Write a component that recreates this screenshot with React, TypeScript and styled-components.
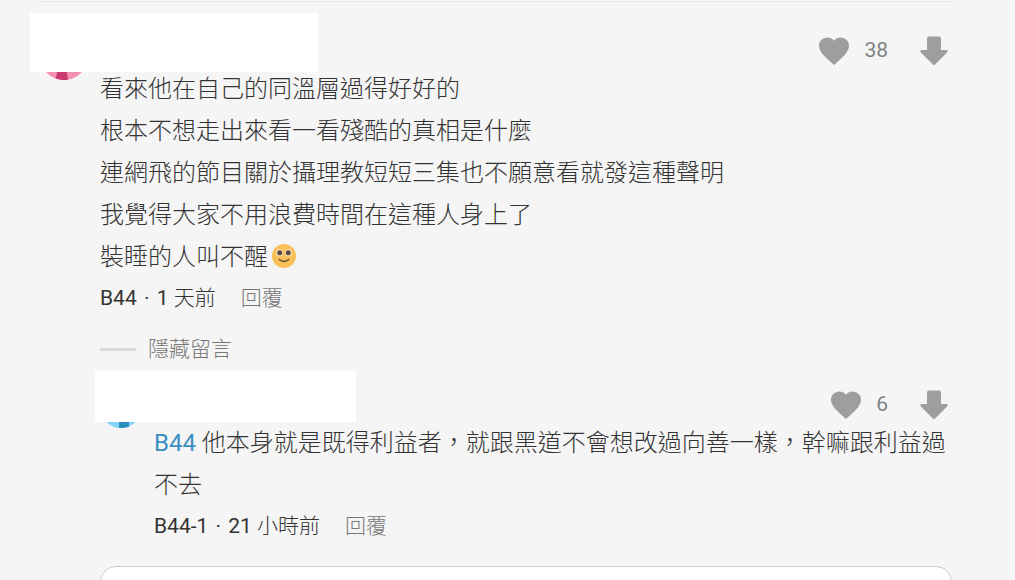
import React from "react";
import styled, { createGlobalStyle } from "styled-components";

const GlobalStyle = createGlobalStyle`
  * { box-sizing: border-box; }
  body {
    margin: 0;
    background: #f5f5f5;
    color: #333;
    font-family: Roboto, "Noto Sans CJK TC", sans-serif;
    font-weight: 400;
  }
  button, a, textarea { font: inherit; }
`;

const Page = styled.main`
  height: 100vh;
  overflow: hidden;
  padding: 1px 63px 0 40px;
`;

const Thread = styled.section`
  border-top: 1px solid #e6e6e6;
  padding-top: 30px;
`;

const CommentRow = styled.article<{ $avatar: number }>`
  position: relative;
  display: grid;
  grid-template-columns: ${(p) => p.$avatar}px minmax(0, 1fr);
  column-gap: 12px;
`;

const Replies = styled.div`
  padding-left: 60px;
`;

const NameCover = styled.div<{ $size: "large" | "small" }>`
  position: absolute;
  background: #fff;
  top: ${(p) => (p.$size === "large" ? -19 : -15)}px;
  left: ${(p) => (p.$size === "large" ? -10 : -5)}px;
  width: ${(p) => (p.$size === "large" ? 288 : 261)}px;
  height: ${(p) => (p.$size === "large" ? 59 : 51)}px;
`;

const Actions = styled.div`
  display: flex;
  justify-content: flex-end;
  align-items: center;
  padding-top: 1px;
  color: #9e9e9e;
`;

const IconButton = styled.button`
  display: flex;
  padding: 0;
  border: 0;
  background: none;
  color: inherit;
  cursor: pointer;
`;

const Count = styled.span`
  margin: 0 28px 0 12px;
  padding-bottom: 2px;
  color: #808080;
  font-size: 21px;
  line-height: 34px;
`;

const Text = styled.p`
  margin: -1px 0;
  color: #333;
  font-size: 24px;
  font-weight: 300;
  line-height: 42px;
`;

const Mention = styled.a`
  color: #3b8fc4;
  font-weight: 400;
  text-decoration: none;
`;

const Meta = styled.div`
  display: flex;
  align-items: center;
  gap: 25px;
  color: #333;
  font-size: 21px;
  line-height: 42px;
`;

const Dot = styled.span`
  margin: 0 2px;
`;

const Light = styled.span`
  font-weight: 300;
`;

const TextButton = styled.button`
  padding: 0;
  border: 0;
  background: none;
  color: #777;
  font-weight: 300;
  line-height: 42px;
  cursor: pointer;
`;

const Toggle = styled.div`
  display: flex;
  align-items: center;
  gap: 12px;
  margin: 9px 0 16px;
  font-size: 21px;
`;

const Dash = styled.span`
  width: 36px;
  height: 3px;
  background: #dadada;
`;

const ReplyBox = styled.textarea`
  display: block;
  width: 100%;
  height: 60px;
  margin-top: 19px;
  border: 1px solid #ccc;
  border-radius: 16px;
  background: #fff;
  resize: none;
`;

const Emoji = styled.svg`
  margin-left: 4px;
  vertical-align: -3px;
`;

const Avatar = () => (
  <svg width="48" height="48" viewBox="0 0 48 48" aria-hidden="true">
    <circle cx="24" cy="24" r="24" fill="#f48fb1" />
    <path d="M18 36h8l2 11.700A24 24 0 0 1 15.700 46.500z" fill="#c93a6e" />
  </svg>
);

const ReplyAvatar = () => (
  <svg width="42" height="42" viewBox="0 0 42 42" aria-hidden="true">
    <circle cx="21" cy="21" r="21" fill="#81d4fa" />
    <path d="M19 21h10v19.400A21 21 0 0 1 19 42z" fill="#2a8fbd" />
  </svg>
);

const Votes = ({ count }: { count: number }) => (
  <Actions>
    <IconButton aria-label="喜歡">
      <svg width="36" height="36" viewBox="0 0 24 24" fill="currentColor">
        <path d="M12 21.35l-1.450-1.320C5.400 15.360 2 12.280 2 8.500 2 5.420 4.420 3 7.500 3c1.740 0 3.410.810 4.500 2.090C13.090 3.810 14.760 3 16.500 3 19.580 3 22 5.420 22 8.500c0 3.780-3.400 6.860-8.550 11.540L12 21.350z" />
      </svg>
    </IconButton>
    <Count>{count}</Count>
    <IconButton aria-label="不喜歡">
      <svg width="36" height="36" viewBox="0 0 36 36" fill="currentColor">
        <path d="M13 3.500h10a2 2 0 0 1 2 2V17h4.800c2 0 2.500 1.300 1.300 2.500L19.400 31.200c-.9.900-1.900.9-2.800 0L4.900 19.500C3.700 18.300 4.200 17 6.200 17H11V5.500a2 2 0 0 1 2-2z" />
      </svg>
    </IconButton>
  </Actions>
);

const Smile = () => (
  <Emoji width="24" height="24" viewBox="0 0 24 24" role="img" aria-label="微笑">
    <circle cx="12" cy="12" r="12" fill="#f9bf58" />
    <circle cx="7.500" cy="8.800" r="3.700" fill="#fbdfa8" />
    <circle cx="16.500" cy="8.800" r="3.700" fill="#fbdfa8" />
    <circle cx="7.700" cy="8.800" r="2.500" fill="#584846" />
    <circle cx="16.300" cy="8.800" r="2.500" fill="#584846" />
    <path d="M7.200 15.500c2.500 2.600 7.100 2.600 9.600 0" fill="none" stroke="#66503b" strokeWidth="1.400" strokeLinecap="round" />
  </Emoji>
);

const MetaLine = ({ floor, amount, unit }: { floor: string; amount: number; unit: string }) => (
  <Meta>
    <span>
      {floor} <Dot>·</Dot> {amount} <Light>{unit}</Light>
    </span>
    <TextButton>回覆</TextButton>
  </Meta>
);

export default function App() {
  return (
    <Page>
      <GlobalStyle />
      <Thread>
        <CommentRow $avatar={48}>
          <Avatar />
          <div>
            <Votes count={38} />
            <Text>
              看來他在自己的同溫層過得好好的
              <br />
              根本不想走出來看一看殘酷的真相是什麼
              <br />
              連網飛的節目關於攝理教短短三集也不願意看就發這種聲明
              <br />
              我覺得大家不用浪費時間在這種人身上了
              <br />
              裝睡的人叫不醒
              <Smile />
            </Text>
            <MetaLine floor="B44" amount={1} unit="天前" />
          </div>
          <NameCover $size="large" />
        </CommentRow>
        <Replies>
          <Toggle>
            <Dash />
            <TextButton>隱藏留言</TextButton>
          </Toggle>
          <CommentRow $avatar={42}>
            <ReplyAvatar />
            <div>
              <Votes count={6} />
              <Text>
                <Mention href="#B44">B44</Mention>{" "}
                他本身就是既得利益者，就跟黑道不會想改過向善一樣，幹嘛跟利益過不去
              </Text>
              <MetaLine floor="B44-1" amount={21} unit="小時前" />
            </div>
            <NameCover $size="small" />
          </CommentRow>
          <ReplyBox aria-label="回覆留言" />
        </Replies>
      </Thread>
    </Page>
  );
}
